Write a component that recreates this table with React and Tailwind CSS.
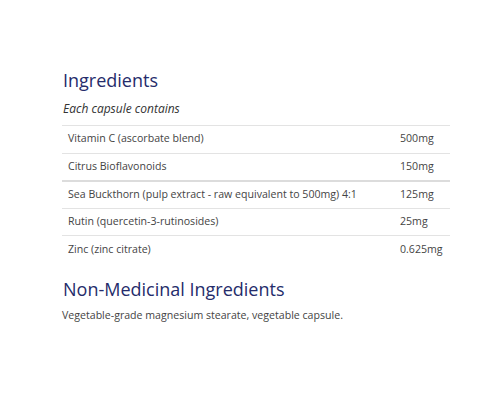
import React from "react";

const rows = [
  ["Vitamin C (ascorbate blend)", "500mg"],
  ["Citrus Bioflavonoids", "150mg"],
  ["Sea Buckthorn (pulp extract - raw equivalent to 500mg) 4:1", "125mg"],
  ["Rutin (quercetin-3-rutinosides)", "25mg"],
  ["Zinc (zinc citrate)", "0.625mg"],
];

function App() {
  return (
    <div
      className="w-[500px] h-[400px] bg-white pt-[67px] pl-[62px] pr-[50px]"
      style={{ fontFamily: '"Open Sans", sans-serif' }}
    >
      <h2 className="text-[18px] leading-[26px] text-[#252c6b] pl-[1px]">Ingredients</h2>
      <p className="text-[12px] italic text-[#333] mt-[7px] mb-[7px] pl-[1px]">
        Each capsule contains
      </p>
      <table className="w-full text-[10.6px] text-[#444] border-collapse">
        <tbody>
          {rows.map(([name, amt], i) => (
            <tr
              key={i}
              className={
                i === 2
                  ? "border-t-2 border-[#dcdcdc]"
                  : "border-t border-[#e3e3e3]"
              }
            >
              <td className="h-[27.5px] pl-[6px] align-middle">{name}</td>
              <td className="h-[27.5px] w-[50px] align-middle">{amt}</td>
            </tr>
          ))}
        </tbody>
      </table>
      <h2 className="text-[18px] leading-[26px] text-[#252c6b] mt-[13px] pl-[1px]">
        Non-Medicinal Ingredients
      </h2>
      <p className="text-[10.6px] text-[#444] mt-[6px]">
        Vegetable-grade magnesium stearate, vegetable capsule.
      </p>
    </div>
  );
}

export default App;
